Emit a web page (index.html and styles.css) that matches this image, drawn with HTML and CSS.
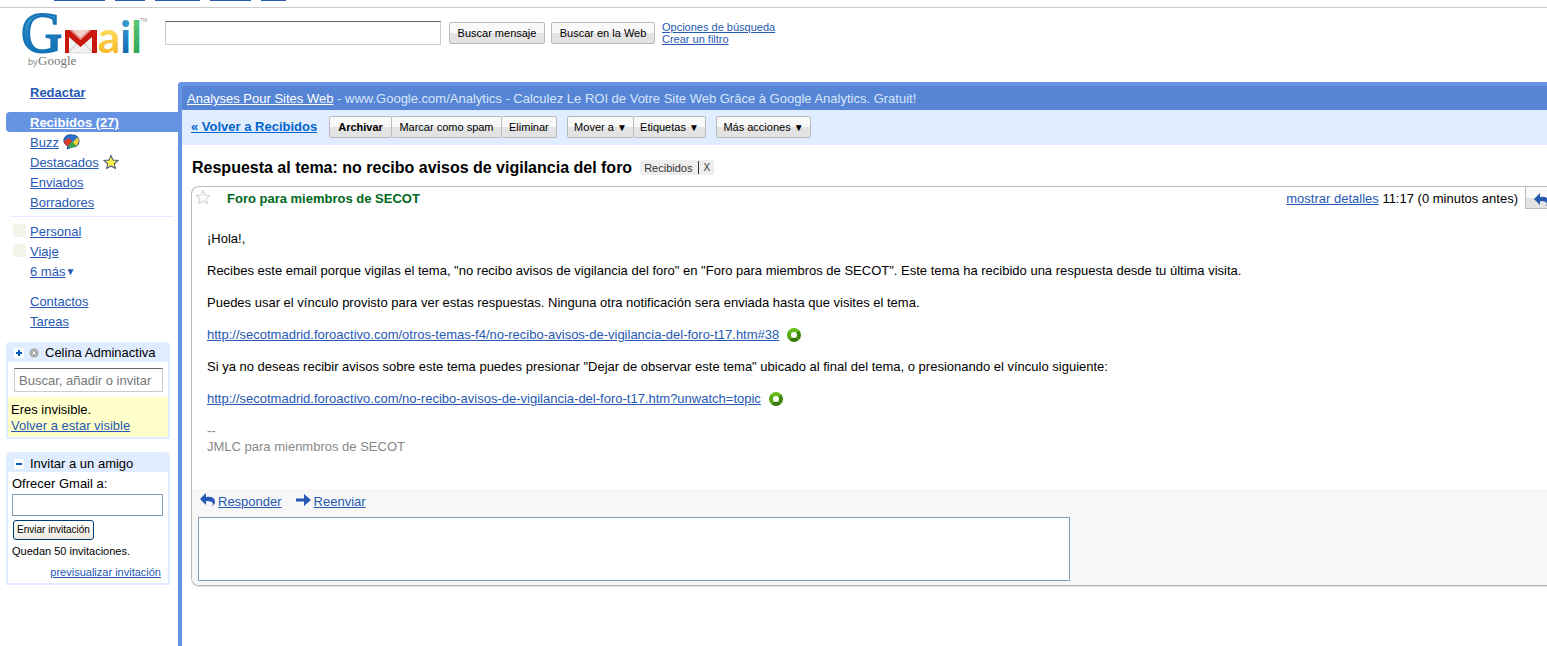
FILE: index.html
```
<!DOCTYPE html>
<html lang="es">
<head>
<meta charset="utf-8">
<title>Gmail - Respuesta al tema</title>
<link rel="stylesheet" href="styles.css">
</head>
<body>
<nav class="topnav" aria-hidden="true"><span class="w51"></span><span class="w30"></span><span class="w45"></span><span class="w41"></span><span class="w25"></span></nav>
<header class="header">
  <svg class="logo" viewBox="0 0 132 58" role="img" aria-label="Gmail by Google">
    <defs>
      <linearGradient id="blue" x1="0" y1="0" x2="0" y2="1"><stop offset="0.2" stop-color="#3d9bd0"/><stop offset="1" stop-color="#0062ab"/></linearGradient>
      <linearGradient id="gold" x1="0" y1="0" x2="0" y2="1"><stop offset="0.3" stop-color="#ffe15c"/><stop offset="1" stop-color="#f6ab1a"/></linearGradient>
      <linearGradient id="green" x1="0" y1="0" x2="0" y2="1"><stop offset="0" stop-color="#69cd84"/><stop offset="1" stop-color="#22a04a"/></linearGradient>
    </defs>
    <text class="logo-g" x="-1" y="39" fill="url(#blue)">G</text>
    <path d="M44 18h29v22H44z" fill="#f2f2f0" stroke="#ccc" stroke-width=".6"/>
    <path d="M47 39l9-10m14 10l-9-10" stroke="#bbb" fill="none"/>
    <path d="M43 40V17h5l10.500 10L69 17h6v23h-5V24L58.500 34 47 24v16z" fill="#c8170d"/>
    <path d="M48 17h21L58.500 27z" fill="#e98075"/>
    <path d="M50 17h17l-8.500 8z" fill="#f3d2cd"/>
    <text class="logo-l" x="76" y="40" fill="url(#gold)">a</text>
    <text class="logo-l" x="98" y="40" fill="url(#blue)">i</text>
    <text class="logo-l" x="109" y="40" fill="url(#green)">l</text>
    <text class="logo-tm" x="118" y="9">TM</text>
    <text class="logo-by" x="6" y="52">by</text>
    <text class="logo-google" x="16" y="52">Google</text>
  </svg>
  <form class="search">
    <input class="search-box" type="text" aria-label="Buscar">
    <button class="btn" type="button">Buscar mensaje</button>
    <button class="btn web" type="button">Buscar en la Web</button>
    <div class="search-links"><a href="#">Opciones de búsqueda</a><a href="#">Crear un filtro</a></div>
  </form>
</header>
<div class="layout">
  <aside class="sidebar">
    <div class="compose"><a href="#">Redactar</a></div>
    <ul class="folders">
      <li class="current"><a href="#">Recibidos (27)</a></li>
      <li><a href="#">Buzz</a>
        <svg class="i-buzz" viewBox="0 0 17 16"><path d="M1 5Q3 0 9 1q7 0 7 6 0 6-7 6l-5 2 1-3Q0 10 1 5z" fill="#2d6fd0" stroke="#1d4d91"/><path d="M9 9L15 3q2 6-2 9z" fill="#f6cf26"/><path d="M9 7l4 5q-4 3-8 1z" fill="#38a94a"/><path d="M1 7l5-3 3 3-4 5q-4-1-4-5z" fill="#dc3a26"/></svg></li>
      <li><a href="#">Destacados</a>
        <svg class="i-star" viewBox="0 0 16 16"><path d="M8 1.500l2 4.500 5 .5-3.700 3.300 1 4.700L8 12l-4.300 2.500 1-4.700L1 6.500 6 6z" fill="#fbf04c" stroke="#4f5e80" stroke-width="1.100"/></svg></li>
      <li><a href="#">Enviados</a></li>
      <li><a href="#">Borradores</a></li>
    </ul>
    <ul class="labels">
      <li><i class="swatch"></i><a href="#">Personal</a></li>
      <li><i class="swatch"></i><a href="#">Viaje</a></li>
      <li class="plain"><a href="#">6 más</a><span class="caret">▼</span></li>
    </ul>
    <ul class="tools">
      <li><a href="#">Contactos</a></li>
      <li><a href="#">Tareas</a></li>
    </ul>
    <section class="box chat">
      <h2><svg class="toggle" viewBox="0 0 10 10"><path d="M0 0h10v10H0z" fill="#fff"/><path d="M2 5h6M5 2v6" stroke="#0057b8" stroke-width="2"/></svg><svg class="toggle" viewBox="0 0 10 10"><circle cx="5" cy="5" r="4.500" fill="#aaa"/><path d="M3.500 3.500l3 3m0-3l-3 3" stroke="#fff"/></svg><span class="name">Celina Adminactiva</span></h2>
      <div class="chat-search"><input type="text" aria-label="Buscar contactos" placeholder="Buscar, añadir o invitar"></div>
      <div class="status">Eres invisible.<br><a href="#">Volver a estar visible</a></div>
    </section>
    <section class="box invite">
      <h2><svg class="toggle" viewBox="0 0 10 10"><path d="M0 0h10v10H0z" fill="#fff"/><path d="M2 5h6" stroke="#0057b8" stroke-width="2"/></svg><span>Invitar a un amigo</span></h2>
      <form class="invite-form">
        <label for="friend">Ofrecer Gmail a:</label>
        <input id="friend" type="text">
        <button type="button">Enviar invitación</button>
        <p>Quedan 50 invitaciones.</p>
        <a href="#">previsualizar invitación</a>
      </form>
    </section>
  </aside>
  <main class="main">
    <div class="ad"><a href="#">Analyses Pour Sites Web</a> - www.Google.com/Analytics - Calculez Le ROI de Votre Site Web Grâce à Google Analytics. Gratuit!</div>
    <div class="toolbar">
      <a class="back" href="#">« Volver a Recibidos</a>
      <div class="group g1"><button class="btn strong" type="button">Archivar</button><button class="btn" type="button">Marcar como spam</button><button class="btn" type="button">Eliminar</button></div>
      <div class="group g2"><button class="btn" type="button">Mover a <span>▼</span></button><button class="btn" type="button">Etiquetas <span>▼</span></button></div>
      <button class="btn more" type="button">Más acciones <span>▼</span></button>
    </div>
    <div class="subject"><h1>Respuesta al tema: no recibo avisos de vigilancia del foro</h1><span class="tag"><span>Recibidos</span><button type="button" aria-label="Quitar etiqueta">X</button></span></div>
    <article class="card">
      <div class="card-head">
        <svg class="i-faint" viewBox="0 0 16 16"><path d="M8 1.500l2 4.500 5 .5-3.700 3.300 1 4.700L8 12l-4.300 2.500 1-4.700L1 6.500 6 6z" fill="#fafafa" stroke="#ccc"/></svg>
        <strong>Foro para miembros de SECOT</strong>
        <span class="when"><a href="#">mostrar detalles</a> 11:17 (0 minutos antes)</span>
        <button class="reply-btn" type="button" aria-label="Responder"><svg class="arrow" viewBox="0 0 15 14"><path d="M0 6l6-6v4q9-1 9 5 0 3-4 4 2-1 2-2 0-3-7-3v4z" fill="#2659b3"/></svg></button>
      </div>
      <div class="message">
        <p>¡Hola!,</p>
        <p>Recibes este email porque vigilas el tema, "no recibo avisos de vigilancia del foro" en "Foro para miembros de SECOT". Este tema ha recibido una respuesta desde tu última visita.</p>
        <p>Puedes usar el vínculo provisto para ver estas respuestas. Ninguna otra notificación sera enviada hasta que visites el tema.</p>
        <p><a href="#">http://secotmadrid.foroactivo.com/otros-temas-f4/no-recibo-avisos-de-vigilancia-del-foro-t17.htm#38</a><i class="ring"></i></p>
        <p>Si ya no deseas recibir avisos sobre este tema puedes presionar "Dejar de observar este tema" ubicado al final del tema, o presionando el vínculo siguiente:</p>
        <p><a href="#">http://secotmadrid.foroactivo.com/no-recibo-avisos-de-vigilancia-del-foro-t17.htm?unwatch=topic</a><i class="ring"></i></p>
        <p class="signature">--<br>JMLC para mienmbros de SECOT</p>
      </div>
      <div class="reply">
        <div class="reply-links">
          <svg class="arrow" viewBox="0 0 15 14"><path d="M0 6l6-6v4q9-1 9 5 0 3-4 4 2-1 2-2 0-3-7-3v4z" fill="#2659b3"/></svg><a href="#">Responder</a>
          <svg class="arrow forward" viewBox="0 0 15 14"><path d="M0 5.500h8V1l7 6-7 6V8.500H0z" fill="#2659b3"/></svg><a href="#">Reenviar</a>
        </div>
        <textarea aria-label="Respuesta"></textarea>
      </div>
    </article>
  </main>
</div>
</body>
</html>
```
FILE: styles.css
```
* { box-sizing: border-box; }
body {
  margin: 0;
  min-height: 100vh;
  display: flex;
  flex-direction: column;
  overflow-x: hidden;
  background: #fff;
  color: #000;
  font: 13px/16px "Liberation Sans", Arial, sans-serif;
}
a { color: #2659b3; text-decoration: underline; }
ul, p, h1, h2 { margin: 0; padding: 0; list-style: none; font: inherit; }
svg { display: block; flex: none; }
input, textarea, button { font: inherit; margin: 0; border-radius: 0; }

.topnav { display: flex; gap: 10px; height: 8px; padding-left: 54px; border-bottom: 1px solid #ccc; }
.topnav span { height: 1px; background: #2659b3; }
.w51 { width: 51px; }
.w30 { width: 30px; }
.w45 { width: 45px; }
.w41 { width: 41px; }
.w25 { width: 25px; }

.header { display: flex; height: 74px; padding: 5px 0 0 22px; }
.logo { width: 132px; height: 58px; margin-right: 11px; overflow: visible; }
.logo-g { font: 57px "Liberation Serif", serif; stroke: #1673b5; stroke-width: 2px; }
.logo-l { font: bold 44px Lato, sans-serif; }
.logo-tm { font: 5px "Liberation Sans", sans-serif; fill: #999; }
.logo-by { font: 9px "Liberation Sans", sans-serif; fill: #888; }
.logo-google { font: 13px "Liberation Serif", serif; fill: #777; }
.search { display: flex; align-items: flex-start; padding-top: 8px; }
.search-box { width: 276px; height: 24px; margin-right: 8px; border: 1px solid #ccc; border-top-color: #666; }
.btn {
  height: 22px;
  padding: 0 7px;
  border: 1px solid #bbb;
  border-radius: 2px;
  background: linear-gradient(#f9f9f9 50%, #e3e3e3 50%);
  color: #000;
  font-size: 11px;
  line-height: 20px;
  white-space: nowrap;
}
.search .btn { width: 96px; margin-top: 1px; padding: 0; }
.search .web { width: 104px; margin-left: 6px; }
.search-links { display: flex; flex-direction: column; margin: 0 0 0 7px; font-size: 11px; line-height: 12px; white-space: nowrap; }

.layout { display: flex; flex: 1; }
.sidebar { flex: none; width: 178px; padding-left: 6px; line-height: 20px; }
.compose { padding: 1px 0 0 24px; font-weight: bold; margin-bottom: 9px; }
.folders li { display: flex; align-items: center; height: 20px; padding: 2px 0 0 24px; gap: 4px; }
.folders .current { background: #6694e3; border-radius: 4px 0 0 4px; font-weight: bold; }
.current a { color: #fff; }
.folders svg { margin-top: -2px; }
.i-buzz { width: 17px; height: 16px; }
.i-star { width: 16px; height: 16px; }
.labels { margin: 4px 4px 0; padding-top: 4px; border-top: 1px solid #e0ecff; }
.labels li { display: flex; align-items: center; height: 20px; padding: 2px 0 0 3px; }
.labels .plain { padding-left: 20px; }
.swatch { width: 13px; height: 13px; margin: -3px 4px 0 0; border-radius: 2px; background: #f1f5ec; }
.caret { color: #2659b3; font-size: 10px; }
.tools { margin-top: 11px; padding-left: 24px; }
.box { width: 164px; margin-top: 10px; border: 2px solid #e0ecff; border-top: 0; border-radius: 4px 4px 0 0; line-height: 16px; }
.box h2 { display: flex; align-items: center; gap: 5px; height: 20px; padding: 1px 0 0 6px; background: #e0ecff; white-space: nowrap; border-radius: 4px 4px 0 0; }
.toggle { width: 10px; height: 10px; }
.name { margin-left: 1px; }
.chat-search { padding: 6px 5px 5px 6px; }
.chat-search input { display: block; width: 100%; height: 24px; padding: 0 4px; border: 1px solid #ccc; border-top-color: #666; }
.chat-search input::placeholder { color: #777; opacity: 1; }
.status { padding: 5px 3px 3px; background: #ffc; }
.invite { margin-top: 13px; }
.invite h2 { padding-top: 3px; gap: 6px; }
.invite-form { display: flex; flex-direction: column; align-items: flex-start; padding: 4px 5px 3px 4px; font-size: 11px; }
.invite-form label { font-size: 13px; }
.invite-form input { width: 100%; height: 22px; margin: 2px 0 4px; border: 1px solid #7f9db9; }
.invite-form button { width: 81px; height: 20px; margin-left: 1px; padding: 0; border: 1px solid #003c74; border-radius: 3px; background: linear-gradient(#fff, #ece9de); font-size: 10px; color: #000; white-space: nowrap; }
.invite-form p { margin: 3px 0 5px; }
.invite-form a { align-self: flex-end; margin-right: 2px; }

.main { flex: 1; min-width: 0; border: solid #6694e3; border-width: 4px 0 0 4px; border-radius: 4px 0 0 0; }
.ad { height: 24px; padding-left: 5px; background: #5685d6; color: #d9e6fa; line-height: 25px; white-space: nowrap; overflow: hidden; }
.ad a { color: #fff; }
.toolbar { display: flex; align-items: flex-start; height: 35px; padding: 6px 0 0 9px; background: #e0ecff; }
.back { width: 138px; color: #06c; font-weight: bold; line-height: 21px; white-space: nowrap; }
.group { display: flex; margin-right: 10px; }
.group .btn { flex: 1 1 auto; padding: 0; }
.group .btn + .btn { border-left: 0; }
.btn span { font-size: 10px; }
.g1 { width: 228px; }
.g2 { width: 139px; }
.group .strong { padding: 0 1px; font-weight: bold; }
.more { width: 95px; padding: 0; }
.subject { display: flex; align-items: center; gap: 8px; height: 41px; padding: 4px 0 0 10px; }
.subject h1 { font-size: 16px; line-height: 20px; font-weight: bold; white-space: nowrap; }
.tag { display: flex; align-items: center; height: 15px; padding: 0 4px; border-radius: 2px; background: #eee; color: #333; font-size: 11px; }
.tag button { height: 13px; margin-left: 6px; padding: 0 0 0 4px; border: 0; border-left: 1px solid #333; background: none; color: #333; line-height: 13px; font-size: 10px; }
.card { margin-left: 9px; border: 1px solid #bbb; border-right: 0; border-radius: 8px 0 0 8px; box-shadow: 0 1px 0 #ddd; overflow: hidden; }
.card-head { display: flex; align-items: flex-start; height: 23px; padding-left: 3px; line-height: 23px; }
.card-head strong { margin-left: 16px; color: #00681c; }
.i-faint { width: 16px; height: 16px; margin-top: 2px; }
.when { margin-left: auto; white-space: nowrap; }
.reply-btn { flex: none; width: 22px; height: 22px; margin-left: 7px; padding: 5px 0 0 8px; border: 1px solid #bbb; border-width: 0 0 1px 1px; background: linear-gradient(#f9f9f9 50%, #e3e3e3 50%); overflow: hidden; }
.arrow { width: 15px; height: 14px; }
.message { padding: 21px 15px 34px; }
.message p + p { margin-top: 16px; }
.ring { display: inline-block; width: 14px; height: 14px; margin-left: 8px; border: 4px solid #4aa00c; border-color: #62bb18 #3b8808 #347b08 #55ab12; border-radius: 50%; vertical-align: -3px; }
.signature { color: #888; }
.reply { padding: 4px 6px; background: #f7f7f7; }
.reply-links { display: flex; height: 24px; padding-left: 2px; gap: 3px; }
.reply-links a { line-height: 18px; }
.forward { margin-left: 11px; }
.reply textarea { display: block; width: 872px; max-width: 100%; height: 64px; border: 1px solid #7f9db9; resize: none; background: #fff; }
```
